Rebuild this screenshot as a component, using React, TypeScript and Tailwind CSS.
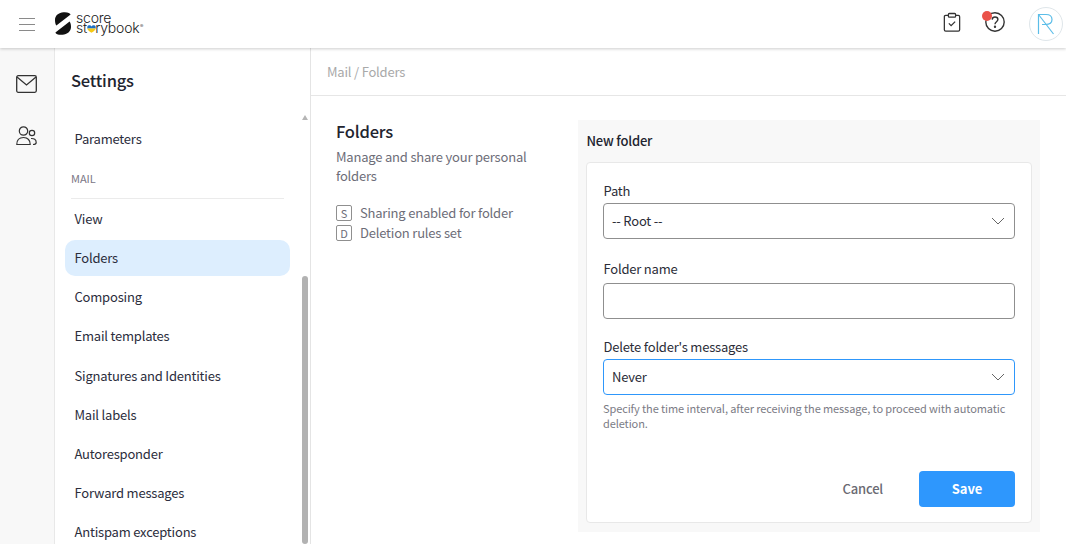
import React from "react";

const font = { fontFamily: '"Noto Sans CJK JP", "Noto Sans", sans-serif' };

function Logo() {
  return (
    <div className="flex items-center ml-5">
      <svg width="16" height="23" viewBox="0 0 16 23" className="block mt-[-1px]">
        <path d="M8.5 0.3C12.5 0 15.2 1 15.6 2.6L1.4 13.6C0.3 12.2 0 10 0 8C0 3.5 3.8 0.6 8.5 0.3Z" fill="#111" />
        <path d="M7.5 22.7C3.5 23 0.8 22 0.4 20.4L14.6 9.4C15.7 10.8 16 13 16 15C16 19.5 12.2 22.4 7.5 22.7Z" fill="#111" />
      </svg>
      <div className="ml-[5px] mb-[2px] flex flex-col font-['Inter',sans-serif] font-light text-[#1a1a1a] text-[14px] leading-[10.5px] tracking-[-0.2px]">
        <span>score</span>
        <span className="relative flex items-start">
          <span>st</span>
          <span className="relative">
            <span className="text-transparent">o</span>
            <svg width="9" height="8" viewBox="0 0 9 8" className="absolute left-[-0.5px] top-[2px]">
              <path d="M0.3 2.2C0.3 0.8 1.4 0.2 2.4 0.2C3.3 0.2 4 0.7 4.5 1.4C5 0.7 5.7 0.2 6.6 0.2C7.6 0.2 8.7 0.8 8.7 2.2V3.4H0.3Z" fill="#1f6fc4" />
              <path d="M0.3 3.4H8.7C8.5 5 6 6.8 4.5 7.8C3 6.8 0.5 5 0.3 3.4Z" fill="#f6c914" />
            </svg>
          </span>
          <span>rybook</span>
          <span className="text-[5px] leading-[6px] ml-[0.5px]">®</span>
        </span>
      </div>
    </div>
  );
}

function Chevron() {
  return (
    <svg width="14" height="8" viewBox="0 0 14 8" fill="none" stroke="#555" strokeWidth="0.9" className="block">
      <path d="M1 1L7 7L13 1" />
    </svg>
  );
}

function SelectBox({ value, focused }: { value: string; focused?: boolean }) {
  return (
    <div
      className={`h-9 rounded-[4px] border flex items-center justify-between pl-2 pr-[9px] text-[13px] tracking-[-0.2px] ${
        focused ? "border-[#2e97fb]" : "border-[#8f8f8f]"
      }`}
    >
      <span className="text-[#2b2d38]">{value}</span>
      <Chevron />
    </div>
  );
}

const items = ["Composing", "Email templates", "Signatures and Identities", "Mail labels", "Autoresponder", "Forward messages", "Antispam exceptions"];

function NavItem({ label, active }: { label: string; active?: boolean }) {
  return (
    <div
      className={`h-9 mb-[3.15px] shrink-0 flex items-center pl-[9.5px] rounded-[10px] text-[13px] tracking-[-0.2px] text-[#2b2d3c] ${
        active ? "bg-[#ddeefe]" : ""
      }`}
    >
      {label}
    </div>
  );
}

export default function App() {
  return (
    <div style={font} className="w-[1066px] h-[544px] overflow-hidden bg-white flex flex-col relative">
      <header className="h-12 shrink-0 flex items-center bg-white shadow-[0_1px_3px_rgba(0,0,0,0.2)] relative z-10">
        <div className="ml-[19px] flex flex-col gap-[5px]">
          <span className="block w-4 h-px bg-[#8a8a8a]" />
          <span className="block w-4 h-px bg-[#8a8a8a]" />
          <span className="block w-4 h-px bg-[#8a8a8a]" />
        </div>
        <Logo />
        <div className="ml-auto flex items-center">
          <svg width="18" height="21" viewBox="0 0 20 22" fill="none" stroke="#333" strokeWidth="1.4" className="block mr-6 mt-[-4px]">
            <path d="M6 3H3C2 3 1.5 3.6 1.5 4.5V19C1.5 20 2 20.5 3 20.5H17C18 20.5 18.5 20 18.5 19V4.5C18.5 3.6 18 3 17 3H14" />
            <rect x="6" y="1" width="8" height="4" rx="1" />
            <path d="M6.5 12L9 14.5L13.5 10" />
          </svg>
          <div className="relative w-5 h-5 mr-[24px] mt-[-4px]">
            <svg width="20" height="20" viewBox="0 0 20 20" fill="none" stroke="#333" strokeWidth="1.4" className="block">
              <circle cx="10" cy="10" r="9.2" />
              <path d="M7.2 7.6C7.3 5.9 8.5 5 10 5C11.6 5 12.9 6 12.9 7.5C12.9 9.6 10 9.8 10 12.2" />
              <circle cx="10" cy="14.8" r="0.5" fill="#333" />
            </svg>
            <span className="absolute left-[-3px] top-[-1px] w-[10px] h-[10px] rounded-full bg-[#ea5249]" />
          </div>
          <div className="w-[34px] h-[34px] rounded-full border border-[#dfe6ea] mr-[3px] flex items-center justify-center">
            <svg width="18" height="22" viewBox="0 0 18 22" fill="none" stroke="#5bbde8" strokeWidth="1.2" className="block">
              <path d="M1.5 21V1.5H9C13.5 1.5 15 4 15 6.5C15 9.5 12.5 11.5 8.5 11.5H5" />
              <path d="M1.5 1.5L16.5 21" />
            </svg>
          </div>
        </div>
      </header>

      <div className="flex flex-1 min-h-0">
        <aside className="w-[55px] shrink-0 bg-[#f8f8f8] border-r border-[#e8e8e8] flex flex-col items-center pt-[27px] pr-[2px] gap-[34px]">
          <svg width="21" height="18" viewBox="0 0 21 18" fill="none" stroke="#333" strokeWidth="1.3" className="block">
            <rect x="0.7" y="0.7" width="19.6" height="16.6" rx="1.5" />
            <path d="M1 2L10.5 10L20 2" />
          </svg>
          <svg width="21" height="20" viewBox="0 0 21 20" fill="none" stroke="#333" strokeWidth="1.2" className="block mt-[-1px]">
            <circle cx="7.5" cy="5" r="4.2" />
            <path d="M0.8 18.5C0.8 14 3.5 11.5 7.5 11.5C11.5 11.5 14.2 14 14.2 18.5Z" />
            <circle cx="16" cy="7" r="2.7" />
            <path d="M15 12.5C18 12.3 20.2 13.5 20.2 16.5C20.2 17.6 19.5 18.5 17 18.5" />
          </svg>
        </aside>

        <nav className="w-[256px] shrink-0 border-r border-[#e4e4e4] relative flex flex-col overflow-hidden">
          <h2 className="text-[16.5px] tracking-[-0.2px] leading-[26px] font-medium text-[#22242f] ml-4 mt-[19px]">Settings</h2>
          <div className="mt-[28px] pl-[10px] pr-[20px] flex flex-col">
            <NavItem label="Parameters" />
            <div className="ml-[6px] mr-[6px] mt-[2px] h-[37px] pt-[8px] border-b border-[#ebebeb] text-[11px] leading-4 text-[#7a7686]">
              MAIL
            </div>
            <div className="h-[1.6px] shrink-0" />
            <NavItem label="View" />
            <NavItem label="Folders" active />
            {items.map((t) => (
              <NavItem key={t} label={t} />
            ))}
          </div>
          <span className="absolute right-[2px] top-[67px] w-0 h-0 border-x-[3.5px] border-x-transparent border-b-[5px] border-b-[#b5b5b5]" />
          <span className="absolute right-[2px] top-[228px] bottom-0 w-[6px] rounded-full bg-[#b2b2b2]" />
        </nav>

        <main className="flex-1 min-w-0 flex flex-col">
          <div className="h-[48px] shrink-0 border-b border-[#e6e6e6] flex items-center pl-4 pt-[1px] text-[13px] tracking-[-0.2px] text-[#a9a9a9]">
            Mail / Folders
          </div>
          <div className="flex flex-1 min-h-0 pt-6 pl-[25px]">
            <section className="w-[242px] shrink-0">
              <h1 className="text-[16.5px] tracking-[-0.2px] leading-[26px] font-medium text-[#22242f] mt-[-2px]">Folders</h1>
              <p className="text-[13px] tracking-[-0.2px] leading-[19px] text-[#6d6d78] mt-[3px] w-[205px]">Manage and share your personal folders</p>
              <div className="mt-5 flex flex-col gap-[4px] text-[13px] tracking-[-0.2px] text-[#6d6d78]">
                <div className="flex items-center h-4">
                  <span className="w-4 h-4 border border-[#8f8f8f] rounded-[2px] text-[11px] leading-[14px] text-center">S</span>
                  <span className="ml-2">Sharing enabled for folder</span>
                </div>
                <div className="flex items-center h-4">
                  <span className="w-4 h-4 border border-[#8f8f8f] rounded-[2px] text-[11px] leading-[14px] text-center">D</span>
                  <span className="ml-2">Deletion rules set</span>
                </div>
              </div>
            </section>

            <section className="w-[462px] h-[412px] shrink-0 bg-[#f8f8f8] px-2">
              <h3 className="h-[42px] flex items-center pl-[0.5px] text-[13px] tracking-[-0.2px] font-medium text-[#22242f]">New folder</h3>
              <div className="h-[361px] bg-white rounded-[4px] border border-[#e8e8e8] px-4 pt-[17px] flex flex-col">
                <label className="text-[13px] tracking-[-0.2px] leading-[21px] pl-[0.5px] text-[#2b2d38] block mb-[2px]">Path</label>
                <SelectBox value="-- Root --" />
                <label className="text-[13px] tracking-[-0.2px] leading-[21px] pl-[0.5px] text-[#2b2d38] block mt-[19px] mb-[4px]">Folder name</label>
                <div className="h-9 rounded-[4px] border border-[#8f8f8f]" />
                <label className="text-[13px] tracking-[-0.2px] leading-[21px] pl-[0.5px] text-[#2b2d38] block mt-[17px] mb-[2px]">Delete folder's messages</label>
                <SelectBox value="Never" focused />
                <p className="text-[11px] tracking-[-0.1px] leading-[15px] text-[#7b7b85] mt-[6px]">
                  Specify the time interval, after receiving the message, to proceed with automatic deletion.
                </p>
                <div className="mt-auto mb-[15px] flex items-center justify-end">
                  <span className="text-[13px] tracking-[-0.2px] font-medium text-[#6a6a72] mr-[36px]">Cancel</span>
                  <button className="w-24 h-9 rounded-[4px] bg-[#2e97fd] text-white text-[13px] tracking-[-0.1px] font-bold">Save</button>
                </div>
              </div>
            </section>
          </div>
        </main>
      </div>
    </div>
  );
}
